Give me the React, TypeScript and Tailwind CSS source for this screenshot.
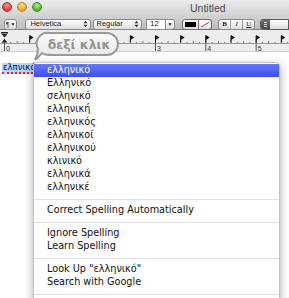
import React from "react";

type Row = { kind: "item"; label: string; active?: boolean } | { kind: "sep" };

const rows: Row[] = [
  { kind: "item", label: "ελληνικό", active: true },
  { kind: "item", label: "Ελληνικό" },
  { kind: "item", label: "σεληνικό" },
  { kind: "item", label: "ελληνική" },
  { kind: "item", label: "ελληνικός" },
  { kind: "item", label: "ελληνικοί" },
  { kind: "item", label: "ελληνικού" },
  { kind: "item", label: "κλινικό" },
  { kind: "item", label: "ελληνικά" },
  { kind: "item", label: "ελληνικέ" },
  { kind: "sep" },
  { kind: "item", label: "Correct Spelling Automatically" },
  { kind: "sep" },
  { kind: "item", label: "Ignore Spelling" },
  { kind: "item", label: "Learn Spelling" },
  { kind: "sep" },
  { kind: "item", label: "Look Up \"ελληνικό\"" },
  { kind: "item", label: "Search with Google" },
  { kind: "sep" },
];

const INCH = 50.33;

function Updown() {
  return (
    <svg width="5" height="8" viewBox="0 0 5 8" className="shrink-0">
      <path d="M0.5 3.2 L2.5 0.8 L4.5 3.2 Z M0.5 4.8 L2.5 7.2 L4.5 4.8 Z" fill="#333" />
    </svg>
  );
}

function Ruler() {
  const ticks: React.ReactNode[] = [];
  for (let i = 0; i <= 45; i++) {
    const x = 4.5 + (i * INCH) / 8;
    if (i % 8 === 0) {
      ticks.push(<line key={"t" + i} x1={x} y1={9} x2={x} y2={21} stroke="#555" strokeWidth={1} />);
    } else {
      const h = i % 4 === 0 ? 3 : i % 2 === 0 ? 2 : 1;
      ticks.push(<line key={"t" + i} x1={x} y1={13 - h} x2={x} y2={13} stroke="#777" strokeWidth={1} />);
    }
  }
  const flags: React.ReactNode[] = [];
  for (let j = 1; j <= 11; j++) {
    const x = 4.5 + (j * INCH) / 2;
    flags.push(
      <g key={"f" + j}>
        <line x1={x} y1={5.5} x2={x} y2={12.5} stroke="#111" strokeWidth={1} />
        <path d={`M${x} 5 L${x + 4} 7.5 L${x} 10 Z`} fill="#111" />
      </g>
    );
  }
  // 1 and 2 sit under the speech bubble
  const nums = [0, 3, 4, 5].map((n) => (
    <text key={"n" + n} x={4.5 + n * INCH + 1.5} y={20.5} fontSize="7" fill="#333" fontFamily="'Liberation Sans', sans-serif">
      {n}
    </text>
  ));
  return (
    <svg width="289" height="22" viewBox="0 0 289 22" className="block">
      <line x1={0} y1={13.5} x2={289} y2={13.5} stroke="#9a9a9a" strokeWidth={1} />
      {ticks}
      {flags}
      {nums}
      <rect x={1} y={2} width={7} height={1.5} fill="#222" />
      <path d="M1.5 4 L7.5 4 L4.5 7.5 Z" fill="#222" />
      <path d="M1.5 12.5 L7.5 12.5 L4.5 9 Z" fill="#222" />
    </svg>
  );
}

export default function App() {
  return (
    <div className="relative w-[289px] h-[298px] overflow-hidden bg-white font-['Liberation_Sans',sans-serif]">
      {/* title bar + toolbar */}
      <div className="h-[30px] bg-linear-to-b from-[#ececec] to-[#bdbdbd] border-b border-[#7f7f7f]">
        <div className="relative h-[14px] flex items-center pl-[2px] gap-[5px]">
          <span className="w-[10px] h-[10px] rounded-full bg-[radial-gradient(circle_at_50%_30%,#ff9c94,#dc3b33_70%)] border border-[#b0322c]" />
          <span className="w-[10px] h-[10px] rounded-full bg-[radial-gradient(circle_at_50%_30%,#ffe089,#e7a521_70%)] border border-[#c08718]" />
          <span className="w-[10px] h-[10px] rounded-full bg-[radial-gradient(circle_at_50%_30%,#b6f08e,#4cae2a_70%)] border border-[#3d8d22]" />
          <span className="ml-[143px] text-[10.5px] leading-none text-[#4a4a4a] pt-[2px]">Untitled</span>
        </div>
        <div className="flex items-center h-[14px] mt-[3px] text-[7.5px] text-[#222]">
          <div className="ml-[4px] w-[14px] h-[11px] rounded-[3px] border border-[#8a8a8a] bg-linear-to-b from-white to-[#dcdcdc] flex items-center justify-center gap-[1px] leading-none">
            <span className="text-[7px]">¶</span>
            <span className="text-[5px]">▼</span>
          </div>
          <div className="ml-[8px] w-[68px] h-[11px] rounded-[3px] border border-[#8a8a8a] bg-linear-to-b from-white to-[#dcdcdc] flex items-center justify-between pl-[4px] pr-[2px] leading-none">
            <span>Helvetica</span>
            <Updown />
          </div>
          <div className="ml-[2px] w-[52px] h-[11px] rounded-[3px] border border-[#8a8a8a] bg-linear-to-b from-white to-[#dcdcdc] flex items-center justify-between pl-[3px] pr-[2px] leading-none">
            <span>Regular</span>
            <Updown />
          </div>
          <div className="ml-[4px] w-[20px] h-[11px] border border-[#8a8a8a] bg-white flex items-center pl-[3px] leading-none">
            12
          </div>
          <div className="w-[10px] h-[11px] rounded-r-[3px] border border-l-0 border-[#8a8a8a] bg-linear-to-b from-white to-[#dcdcdc] flex items-center justify-center text-[5px] leading-none">
            ▼
          </div>
          <div className="ml-[7px] w-[17px] h-[11px] rounded-l-[3px] border border-[#6d6d6d] bg-linear-to-b from-white to-[#dcdcdc] p-[2px]">
            <div className="w-full h-full bg-black" />
          </div>
          <div className="w-[14px] h-[11px] rounded-r-[3px] border border-l-0 border-[#6d6d6d] bg-linear-to-b from-white to-[#dcdcdc] p-[2px]">
            <svg width="100%" height="100%" viewBox="0 0 10 7" preserveAspectRatio="none" className="block bg-white">
              <line x1="0" y1="7" x2="10" y2="0" stroke="#e02020" strokeWidth="1.2" />
            </svg>
          </div>
          <div className="ml-[6px] w-[39px] h-[11px] rounded-[3px] border border-[#8a8a8a] bg-linear-to-b from-white to-[#dcdcdc] flex items-stretch leading-none text-[7px] font-['Liberation_Serif',serif]">
            <span className="flex-1 flex items-center justify-center font-bold border-r border-[#a0a0a0]">B</span>
            <span className="flex-1 flex items-center justify-center italic border-r border-[#a0a0a0]">I</span>
            <span className="flex-1 flex items-center justify-center underline">U</span>
          </div>
          <div className="ml-[5px] w-[30px] h-[11px] rounded-l-[3px] border border-[#5a5a5a] flex overflow-hidden">
            <div className="w-[9px] h-full bg-linear-to-b from-[#6a6a6a] to-[#4a4a4a] flex flex-col justify-center items-center gap-[1px]">
              <span className="block w-[3px] h-px bg-[#ddd]" />
              <span className="block w-[3px] h-px bg-[#ddd]" />
              <span className="block w-[3px] h-px bg-[#ddd]" />
            </div>
            <div className="flex-1 bg-linear-to-b from-white to-[#dcdcdc]" />
          </div>
        </div>
      </div>

      {/* ruler */}
      <div className="h-[22px] bg-[#ededed] border-b border-[#cfcfcf]">
        <Ruler />
      </div>

      {/* document */}
      <div className="pl-[2px] pt-[1px]">
        <span className="inline-block bg-[#b5d5ff] px-px text-[8.5px] leading-[9px] text-[#0a0a3a] font-['DejaVu_Sans',sans-serif] border-b-2 border-dotted border-[#e02828]">
          ελπνικό
        </span>
      </div>

      {/* speech bubble */}
      <svg className="absolute left-[30px] top-[30px]" width="92" height="33" viewBox="0 0 92 33">
        <defs>
          <linearGradient id="bub" x1="0" y1="0" x2="0" y2="1">
            <stop offset="0" stopColor="#fbfbfb" />
            <stop offset="1" stopColor="#e4e4e4" />
          </linearGradient>
        </defs>
        <path
          d="M20 3 L77 3 A11 11 0 0 1 77 25 L22 25 Q14 25 12 23 Q9 27 5 30 Q8 25 8 19 A11 11 0 0 1 20 3 Z"
          fill="url(#bub)"
          stroke="#9a9a9a"
          strokeWidth="2"
        />
        <text x="49" y="18.5" textAnchor="middle" fontSize="12.5" fontWeight="bold" fill="#939393" fontFamily="'DejaVu Sans', sans-serif">
          δεξί κλικ
        </text>
      </svg>

      {/* context menu */}
      <div className="absolute left-[33px] top-[62px] w-[247px] h-[250px] bg-white/[0.97] border border-[#c4c4c4] rounded-[4px] shadow-[0_3px_10px_rgba(0,0,0,0.35)] pt-px font-['DejaVu_Sans',sans-serif] text-[9.7px] text-[#111]">
        {rows.map((r, i) =>
          r.kind === "sep" ? (
            <div key={i} className="h-[10px] flex items-center">
              <div className="w-full h-px bg-[#e1e1e1]" />
            </div>
          ) : (
            <div
              key={i}
              className={
                r.active
                  ? "h-[13px] flex items-center pl-[13px] bg-linear-to-b from-[#6678f6] to-[#3a4ef0] text-white"
                  : "h-[13px] flex items-center pl-[13px]"
              }
            >
              {r.label}
            </div>
          )
        )}
      </div>
    </div>
  );
}
